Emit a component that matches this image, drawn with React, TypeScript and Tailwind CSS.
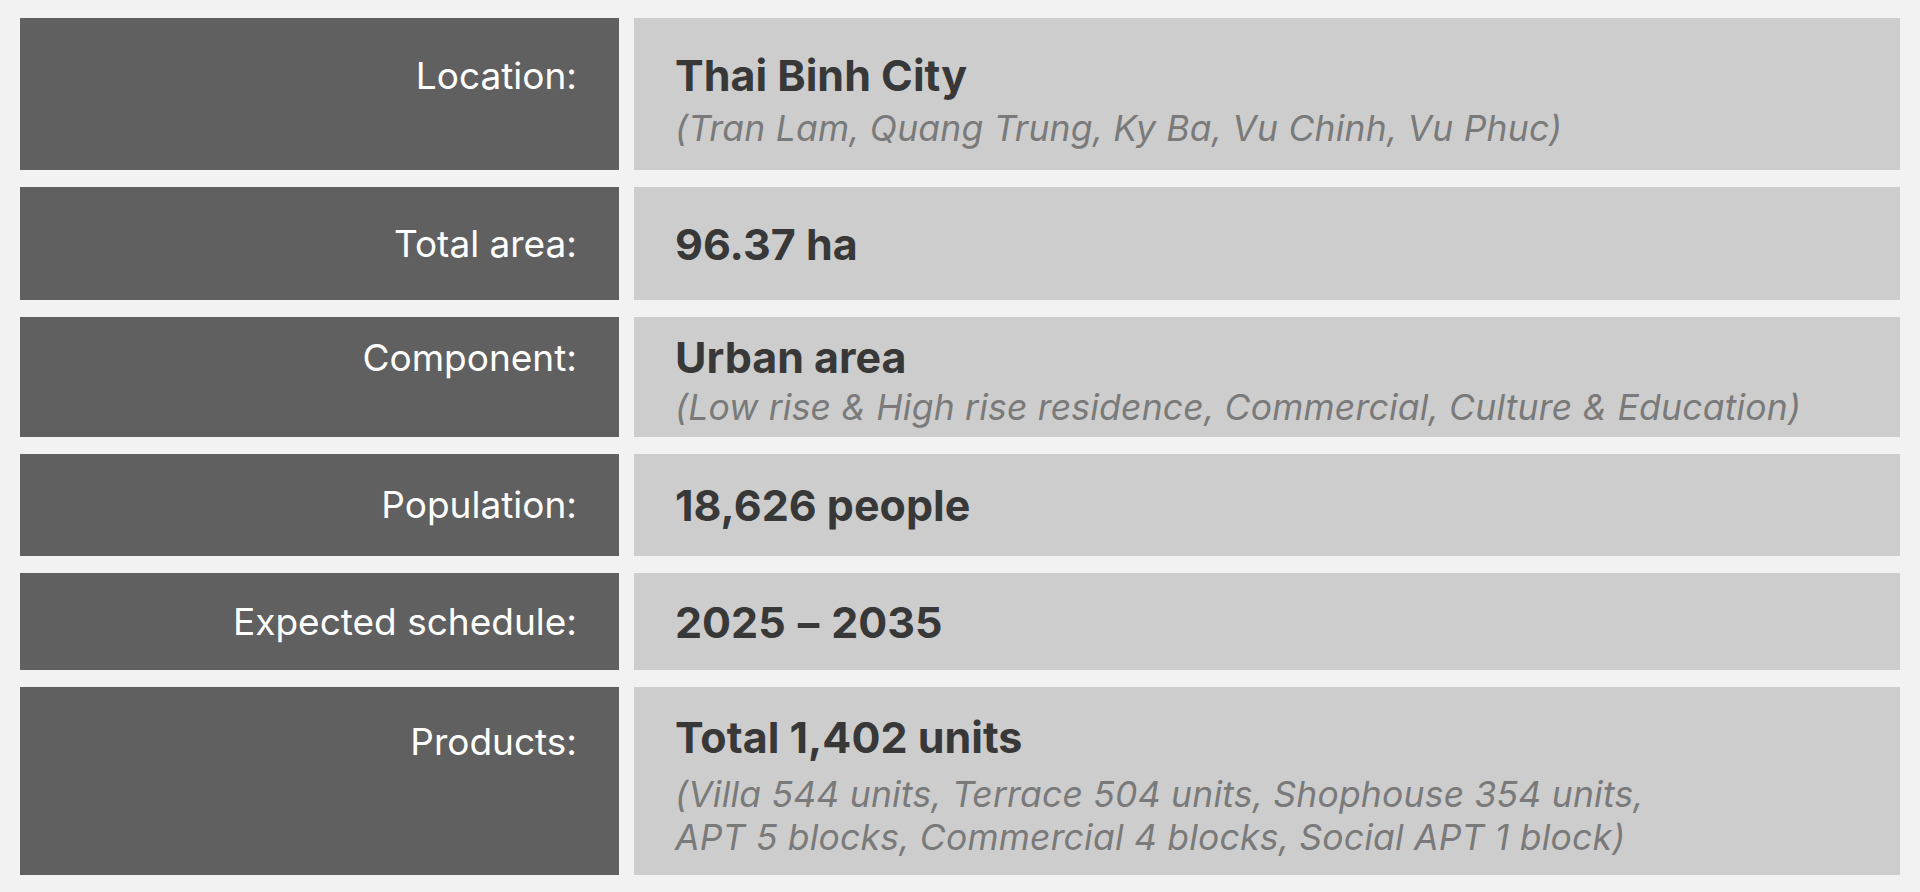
import React from "react";

type Row = {
  label: string;
  title: React.ReactNode;
  subs?: string[];
  h: string;
  pt?: string;
  lpt?: string;
  mt?: string;
};

const rows: Row[] = [
  { label: "Location:", title: "Thai Binh City", subs: ["(Tran Lam, Quang Trung, Ky Ba, Vu Chinh, Vu Phuc)"], h: "h-[152px]", pt: "pt-[37px]", lpt: "pt-[38px]", mt: "mt-[12px]" },
  { label: "Total area:", title: "96.37 ha", h: "h-[113px]" },
  { label: "Component:", title: "Urban area", subs: ["(Low rise & High rise residence, Commercial, Culture & Education)"], h: "h-[120px]", pt: "pt-[20px]", lpt: "pt-[21px]", mt: "mt-[9px]" },
  { label: "Population:", title: "18,626 people", h: "h-[102px]" },
  {
    label: "Expected schedule:",
    title: (
      <>
        2025<span className="mx-[12px]">–</span>2035
      </>
    ),
    h: "h-[97px]",
  },
  {
    label: "Products:",
    title: "Total 1,402 units",
    subs: ["(Villa 544 units, Terrace 504 units, Shophouse 354 units,", "APT 5 blocks, Commercial 4 blocks, Social APT 1 block)"],
    h: "h-[188px]",
    pt: "pt-[30px]",
    lpt: "pt-[35px]",
    mt: "mt-[16px]",
  },
];

export default function App() {
  return (
    <div
      className="w-[1920px] h-[892px] bg-[#f2f2f2] px-[20px] pt-[18px] flex flex-col gap-[17px]"
      style={{ fontFamily: "Inter, 'Noto Sans', sans-serif" }}
    >
      {rows.map((r, i) => {
        const align = r.lpt ? `items-start ${r.lpt}` : "items-center";
        return (
          <div key={i} className={`flex gap-[15px] ${r.h}`}>
            <div className={`w-[599px] bg-[#606060] flex justify-end pr-[42px] ${align}`}>
              <span className="text-white text-[37px] leading-[40px] font-normal">{r.label}</span>
            </div>
            <div className={`flex-1 bg-[#cdcdcd] flex flex-col pl-[41px] ${r.pt ? r.pt : "justify-center"}`}>
              <div className="text-[#383838] text-[43px] leading-[40px] font-bold">{r.title}</div>
              {r.subs && (
                <div className={r.mt}>
                  {r.subs.map((s, j) => (
                    <div key={j} className="text-[#7a7a7a] text-[35.5px] leading-[43px] italic tracking-[0.2px]">
                      {s}
                    </div>
                  ))}
                </div>
              )}
            </div>
          </div>
        );
      })}
    </div>
  );
}
